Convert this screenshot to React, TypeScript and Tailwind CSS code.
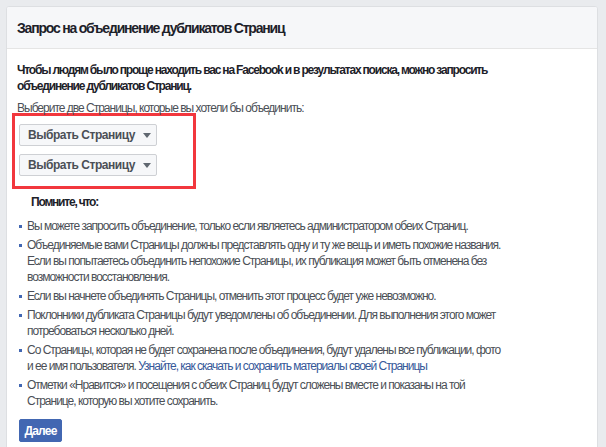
const font = { fontFamily: '"Liberation Sans", Arial, sans-serif' };

const items: string[] = [
    'Вы можете запросить объединение, только если являетесь администратором обеих Страниц.',
    'Объединяемые вами Страницы должны представлять одну и ту же вещь и иметь похожие названия. Если вы попытаетесь объединить непохожие Страницы, их публикация может быть отменена без возможности восстановления.',
    'Если вы начнете объединять Страницы, отменить этот процесс будет уже невозможно.',
    'Поклонники дубликата Страницы будут уведомлены об объединении. Для выполнения этого может потребоваться несколько дней.',
];

function PickButton() {
    return (
        <button className="flex h-[22px] w-[138px] items-center gap-[8px] whitespace-nowrap rounded-[2px] border border-[#ced0d4] bg-[#f6f7f9] pl-[8px] text-[12px] font-bold tracking-[-0.45px] text-[#4b4f56]">
            Выбрать Страницу
            <span className="h-0 w-0 border-x-[4px] border-t-[5px] border-x-transparent border-t-[#606770]" />
        </button>
    );
}

function Bullet({ children }: { children: React.ReactNode }) {
    return (
        <li className="flex">
            <span className="mt-[7px] mr-[5px] h-[3px] w-[3px] shrink-0 bg-[#4267b2]" />
            <span>{children}</span>
        </li>
    );
}

export default function App() {
    return (
        <div className="min-h-screen bg-[#e9ebee] pt-[6px] pl-[6px] pr-[8px]" style={font}>
            <div className="overflow-hidden rounded-[3px] border border-[#dddfe2] bg-white">
                {/* Header */}
                <div className="flex h-[42px] items-center border-b border-[#e5e5e5] bg-[#f6f7f9] px-[10px]">
                    <h2 className="pt-[1px] text-[14px] font-bold tracking-[-1.2px] text-[#1d2129]">Запрос на объединение дубликатов Страниц</h2>
                </div>

                {/* Body */}
                <div className="px-[10px] pt-[13px] pb-[20px] text-[12px] leading-[16px] tracking-[-1px] text-[#4b4f56]">
                    <p className="w-[520px] font-bold tracking-[-1.18px] text-[#1d2129]">
                        Чтобы людям было проще находить вас на Facebook и в результатах поиска, можно запросить объединение дубликатов Страниц.
                    </p>
                    <p className="mt-[6px]">Выберите две Страницы, которые вы хотели бы объединить:</p>

                    <div className="-ml-[5px] mt-[-3px] flex w-[184px] flex-col gap-[8px] border-[3px] border-[#f2373d] pt-[8px] pb-[10px] pl-[4px]">
                        <PickButton />
                        <PickButton />
                    </div>

                    <p className="mt-[5px] pl-[14px] font-bold tracking-[-1.2px] text-[#1d2129]">Помните, что:</p>

                    <ul className="mt-[8px] flex w-[490px] flex-col gap-[3px] pl-[2px]">
                        {items.map((t, i) => (
                            <Bullet key={i}>{t}</Bullet>
                        ))}
                        <Bullet>
                            Со Страницы, которая не будет сохранена после объединения, будут удалены все публикации, фото и ее имя пользователя.{' '}
                            <a className="text-[#365899]">Узнайте, как скачать и сохранить материалы своей Страницы</a>
                        </Bullet>
                        <Bullet>
                            Отметки «Нравится» и посещения с обеих Страниц будут сложены вместе и показаны на той Странице, которую вы хотите сохранить.
                        </Bullet>
                    </ul>

                    <button className="mt-[10px] ml-[2px] h-[23px] w-[43px] rounded-[2px] border border-[#4267b2] bg-[#4267b2] text-[12px] font-bold tracking-[-0.8px] text-white">
                        Далее
                    </button>
                </div>
            </div>
        </div>
    );
}
